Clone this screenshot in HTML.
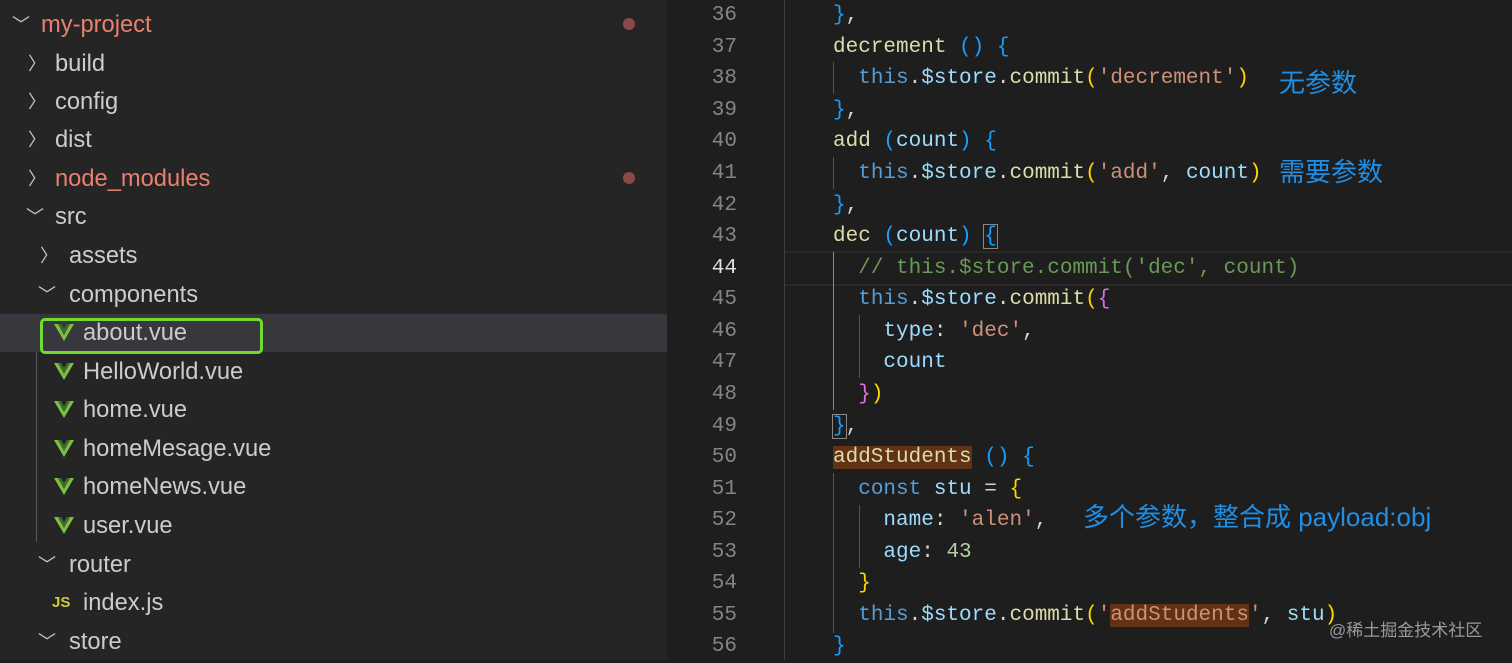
<html><head><style>
body{margin:0;width:1512px;height:660px;overflow:hidden;background:#1e1e1e;position:relative;font-family:"Liberation Sans","Noto Sans CJK SC",sans-serif}
#side{position:absolute;left:0;top:0;width:667px;height:660px;background:#252526}
.r{position:absolute;left:0;width:667px;height:38px;line-height:40px;font-size:23.7px;color:#cccccc}
.r span.t{position:absolute}
.chev{position:absolute;top:0;font-size:18px;color:#c5c5c5}
.v{position:absolute;top:11px}
.dot{position:absolute;left:623px;top:13px;width:12px;height:12px;border-radius:6px;background:#8a4b48}
#code{position:absolute;left:667px;top:0;right:0;bottom:0;font-family:"Liberation Mono",monospace;font-size:21px}
.l{position:absolute;left:0;height:31.6px;line-height:31.6px;white-space:pre;color:#d4d4d4}
.n{position:absolute;width:70px;text-align:right;color:#858585}
.c{position:absolute;left:166px}
.k{color:#9cdcfe}.f{color:#dcdcaa}.s{color:#ce9178}.th{color:#569cd6}.y{color:#ffd700}.p{color:#da70d6}.b{color:#179fff}.cm{color:#6a9955}
.ann{position:absolute;color:#1f8fe6;font-family:"Liberation Sans","Noto Sans CJK SC",sans-serif;font-size:26px}
.g{position:absolute;width:1px;background:#404040}
</style></head><body>
<div id="side">
<div style="position:absolute;left:0;top:314px;width:667px;height:38px;background:#37373d"></div>
<div style="position:absolute;left:36px;top:352px;width:1px;height:190px;background:#585858"></div>
<div class="r" style="top:5px"><span class="chev" style="left:12px">﹀</span><span class="t" style="left:41px;color:#e9806e">my-project</span><div class="dot"></div></div>
<div class="r" style="top:44px"><span class="chev" style="left:28px">〉</span><span class="t" style="left:55px">build</span></div>
<div class="r" style="top:82px"><span class="chev" style="left:28px">〉</span><span class="t" style="left:55px">config</span></div>
<div class="r" style="top:120px"><span class="chev" style="left:28px">〉</span><span class="t" style="left:55px">dist</span></div>
<div class="r" style="top:159px"><span class="chev" style="left:28px">〉</span><span class="t" style="left:55px;color:#e9806e">node_modules</span><div class="dot"></div></div>
<div class="r" style="top:197px"><span class="chev" style="left:26px">﹀</span><span class="t" style="left:55px">src</span></div>
<div class="r" style="top:236px"><span class="chev" style="left:40px">〉</span><span class="t" style="left:69px">assets</span></div>
<div class="r" style="top:275px"><span class="chev" style="left:38px">﹀</span><span class="t" style="left:69px">components</span></div>
<div class="r" style="top:313px"><svg class="v" style="left:54px" width="20" height="17" viewBox="0 0 20 17"><path d="M0 0h4l6 11 6-11h4L10 17z" fill="#7ac143"/><path d="M4 0h3l3 5 3-5h3L10 11z" fill="#3f6a2a"/></svg><span class="t" style="left:83px">about.vue</span></div>
<div style="position:absolute;left:40px;top:318px;width:217px;height:30px;border:3px solid #6fdc2f;border-radius:5px"></div>
<div class="r" style="top:352px"><svg class="v" style="left:54px" width="20" height="17" viewBox="0 0 20 17"><path d="M0 0h4l6 11 6-11h4L10 17z" fill="#7ac143"/><path d="M4 0h3l3 5 3-5h3L10 11z" fill="#3f6a2a"/></svg><span class="t" style="left:83px">HelloWorld.vue</span></div>
<div class="r" style="top:390px"><svg class="v" style="left:54px" width="20" height="17" viewBox="0 0 20 17"><path d="M0 0h4l6 11 6-11h4L10 17z" fill="#7ac143"/><path d="M4 0h3l3 5 3-5h3L10 11z" fill="#3f6a2a"/></svg><span class="t" style="left:83px">home.vue</span></div>
<div class="r" style="top:429px"><svg class="v" style="left:54px" width="20" height="17" viewBox="0 0 20 17"><path d="M0 0h4l6 11 6-11h4L10 17z" fill="#7ac143"/><path d="M4 0h3l3 5 3-5h3L10 11z" fill="#3f6a2a"/></svg><span class="t" style="left:83px">homeMesage.vue</span></div>
<div class="r" style="top:467px"><svg class="v" style="left:54px" width="20" height="17" viewBox="0 0 20 17"><path d="M0 0h4l6 11 6-11h4L10 17z" fill="#7ac143"/><path d="M4 0h3l3 5 3-5h3L10 11z" fill="#3f6a2a"/></svg><span class="t" style="left:83px">homeNews.vue</span></div>
<div class="r" style="top:506px"><svg class="v" style="left:54px" width="20" height="17" viewBox="0 0 20 17"><path d="M0 0h4l6 11 6-11h4L10 17z" fill="#7ac143"/><path d="M4 0h3l3 5 3-5h3L10 11z" fill="#3f6a2a"/></svg><span class="t" style="left:83px">user.vue</span></div>
<div class="r" style="top:545px"><span class="chev" style="left:38px">﹀</span><span class="t" style="left:69px">router</span></div>
<div class="r" style="top:583px"><span class="t" style="left:52px;font-size:15px;font-weight:bold;color:#cbcb41">JS</span><span class="t" style="left:83px">index.js</span></div>
<div class="r" style="top:622px"><span class="chev" style="left:38px">﹀</span><span class="t" style="left:69px">store</span></div>
</div>
<div id="code">
<div style="position:absolute;left:117px;top:251px;right:0;height:31px;border-top:2px solid #2a2a2a;border-bottom:2px solid #2a2a2a"></div>
<div class="g" style="left:117px;top:0;height:660px"></div>
<div class="g" style="left:166px;top:62px;height:32px;background:#555"></div>
<div class="g" style="left:166px;top:157px;height:32px;background:#555"></div>
<div class="g" style="left:166px;top:252px;height:158px;background:#888"></div>
<div class="g" style="left:192px;top:315px;height:63px;background:#555"></div>
<div class="g" style="left:166px;top:473px;height:160px;background:#555"></div>
<div class="g" style="left:192px;top:505px;height:63px;background:#555"></div>
<div style="position:absolute;left:0;top:2px;right:0;bottom:0">
<div class="l" style="top:-2px"><span class="n">36</span><span class="c"><span class="b">}</span>,</span></div>
<div class="l" style="top:30px"><span class="n">37</span><span class="c"><span class="f">decrement</span> <span class="b">()</span> <span class="b">{</span></span></div>
<div class="l" style="top:61px"><span class="n">38</span><span class="c">  <span class="th">this</span>.<span class="k">$store</span>.<span class="f">commit</span><span class="y">(</span><span class="s">'decrement'</span><span class="y">)</span></span></div>
<div class="l" style="top:93px"><span class="n">39</span><span class="c"><span class="b">}</span>,</span></div>
<div class="l" style="top:124px"><span class="n">40</span><span class="c"><span class="f">add</span> <span class="b">(</span><span class="k">count</span><span class="b">)</span> <span class="b">{</span></span></div>
<div class="l" style="top:156px"><span class="n">41</span><span class="c">  <span class="th">this</span>.<span class="k">$store</span>.<span class="f">commit</span><span class="y">(</span><span class="s">'add'</span>, <span class="k">count</span><span class="y">)</span></span></div>
<div class="l" style="top:188px"><span class="n">42</span><span class="c"><span class="b">}</span>,</span></div>
<div class="l" style="top:219px"><span class="n">43</span><span class="c"><span class="f">dec</span> <span class="b">(</span><span class="k">count</span><span class="b">)</span> <span class="b" style="outline:1px solid #888">{</span></span></div>
<div class="l" style="top:251px"><span class="n" style="color:#e0e0e0">44</span><span class="c">  <span class="cm">// this.$store.commit('dec', count)</span></span></div>
<div class="l" style="top:282px"><span class="n">45</span><span class="c">  <span class="th">this</span>.<span class="k">$store</span>.<span class="f">commit</span><span class="y">(</span><span class="p">{</span></span></div>
<div class="l" style="top:314px"><span class="n">46</span><span class="c">    <span class="k">type</span>: <span class="s">'dec'</span>,</span></div>
<div class="l" style="top:345px"><span class="n">47</span><span class="c">    <span class="k">count</span></span></div>
<div class="l" style="top:377px"><span class="n">48</span><span class="c">  <span class="p">}</span><span class="y">)</span></span></div>
<div class="l" style="top:409px"><span class="n">49</span><span class="c"><span class="b" style="outline:1px solid #888">}</span>,</span></div>
<div class="l" style="top:440px"><span class="n">50</span><span class="c"><span class="f" style="background:#613214">addStudents</span> <span class="b">()</span> <span class="b">{</span></span></div>
<div class="l" style="top:472px"><span class="n">51</span><span class="c">  <span class="th">const</span> <span class="k">stu</span> = <span class="y">{</span></span></div>
<div class="l" style="top:503px"><span class="n">52</span><span class="c">    <span class="k">name</span>: <span class="s">'alen'</span>,</span></div>
<div class="l" style="top:535px"><span class="n">53</span><span class="c">    <span class="k">age</span>: <span style="color:#b5cea8">43</span></span></div>
<div class="l" style="top:566px"><span class="n">54</span><span class="c">  <span class="y">}</span></span></div>
<div class="l" style="top:598px"><span class="n">55</span><span class="c">  <span class="th">this</span>.<span class="k">$store</span>.<span class="f">commit</span><span class="y">(</span><span class="s">'<span style="background:#613214">addStudents</span>'</span>, <span class="k">stu</span><span class="y">)</span></span></div>
<div class="l" style="top:629px"><span class="n">56</span><span class="c"><span class="b">}</span></span></div>
</div>
<div class="ann" style="left:612px;top:63px">无参数</div>
<div class="ann" style="left:612px;top:152px">需要参数</div>
<div class="ann" style="left:416px;top:497px">多个参数，整合成 payload:obj</div>
<div style="position:absolute;left:662px;top:616px;color:#9a9a9a;font-size:17px;font-family:'Liberation Sans','Noto Sans CJK SC',sans-serif">@稀土掘金技术社区</div>
</div>
</body></html>
